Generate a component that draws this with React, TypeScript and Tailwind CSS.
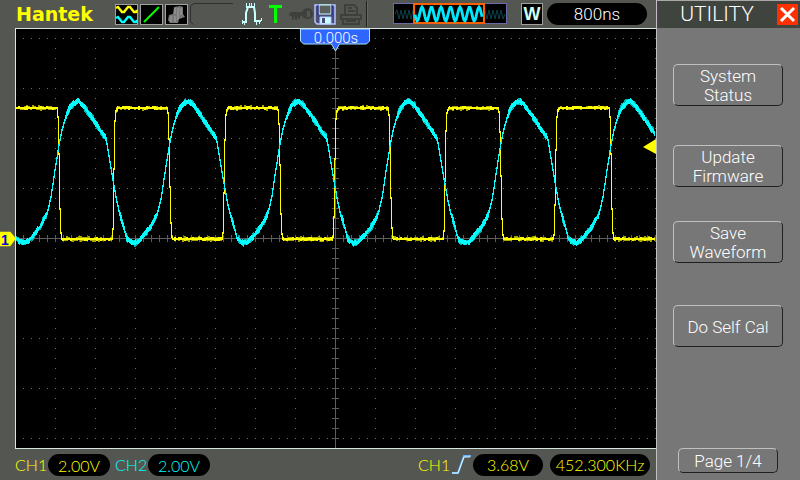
import type { ReactNode } from "react";

const PLOT_W = 640;
const PLOT_H = 419;
const AXIS_X = 319;
const AXIS_Y = 209;
const PERIOD = 110.4;

// one period of each channel, [x, y] in plot pixels
const CH1_SHAPE: [number, number][] = [
  [0, 79], [41, 79], [42, 88], [43, 125], [44, 180], [45, 204], [46, 210],
  [96, 210], [97, 200], [98, 140], [99, 92], [100, 82], [102, 79], [110.4, 79],
];
const CH2_SHAPE: [number, number][] = [
  [0, 209], [3, 212], [7, 214], [11, 213], [16, 208], [24, 198], [31, 185], [35, 168],
  [39, 141], [43, 116], [46, 101], [50, 87], [54, 78], [58, 74], [62, 72], [66, 75],
  [77, 90], [84, 101], [90, 109], [93, 127], [97, 151], [101, 173], [104, 186], [108, 198], [110.4, 209],
];

function noise(i: number): number {
  const n = Math.sin(i * 12.9898) * 43758.5453;
  return n - Math.floor(n);
}

function sample(shape: [number, number][], x: number): number {
  const t = ((x % PERIOD) + PERIOD) % PERIOD;
  for (let i = 1; i < shape.length; i++) {
    const [x0, y0] = shape[i - 1];
    const [x1, y1] = shape[i];
    if (t <= x1) return y0 + ((y1 - y0) * (t - x0)) / (x1 - x0);
  }
  return shape[0][1];
}

// every column is a vertical run from this sample to the next
function trace(shape: [number, number][], thick: number, jitter: number, seed: number): string {
  let d = "";
  for (let x = 0; x < PLOT_W - 1; x++) {
    const a = sample(shape, x);
    const b = sample(shape, x + 1);
    const steep = Math.abs(b - a) > 3;
    // neighbouring columns share their noise so the edge looks stepped
    const up = steep ? 0 : noise(Math.floor(x / 2) + seed) * jitter;
    const down = steep ? 0 : noise(Math.floor(x / 2) * 3 + seed) * jitter;
    const pad = steep ? 1 : thick / 2;
    const top = Math.round(Math.min(a, b) - pad - up);
    const bottom = Math.round(Math.max(a, b) + pad + down);
    d += `M${x} ${top}h1v${bottom - top}h-1z`;
  }
  return d;
}

function gridDots(): string {
  let d = "";
  for (let y = 9; y < PLOT_H; y += 50) {
    for (let x = 7; x < PLOT_W; x += 8) d += `M${x} ${y}h1v1h-1z`;
  }
  for (let x = 39; x < PLOT_W; x += 40) {
    for (let y = 9; y < PLOT_H; y += 10) d += `M${x} ${y}h1v1h-1z`;
  }
  return d;
}

function axes(): string {
  let d = `M0 ${AXIS_Y}h${PLOT_W}v1h-${PLOT_W}zM${AXIS_X} 0h1v${PLOT_H}h-1z`;
  for (let x = 7; x < PLOT_W; x += 8) d += `M${x} ${AXIS_Y - 3}h1v7h-1z`;
  for (let y = 9; y < PLOT_H; y += 10) d += `M${AXIS_X - 3} ${y}h7v1h-7z`;
  return d;
}

const GRID = gridDots();
const AXES = axes();
const CH1_DIM = trace(CH1_SHAPE, 1, 2.2, 5);
const CH1 = trace(CH1_SHAPE, 1, 1.4, 40);
const CH2_DIM = trace(CH2_SHAPE, 2, 3, 17);
const CH2 = trace(CH2_SHAPE, 2, 2.2, 91);

function Plot() {
  return (
    <svg viewBox={`0 0 ${PLOT_W} ${PLOT_H}`} className="block w-full bg-black" role="img" aria-label="Waveforms">
      <g shapeRendering="crispEdges">
        <path d={GRID} fill="#6b6b6b" />
        <path d={AXES} fill="#5c5c5c" />
        <path d={CH1_DIM} fill="#a8a800" />
        <path d={CH1} fill="#ffff00" />
        <path d={CH2_DIM} fill="#00b0b0" />
        <path d={CH2} fill="#00ffff" />
      </g>
      {/* trigger position */}
      <path d="M284.5 0v12l3 3h28l4 7 4-7h27l3-3V0z" fill="#2f66ff" stroke="#a8e4ff" />
      <text x="320" y="14" textAnchor="middle" fill="#fff" className="font-['Roboto'] text-[15px] font-light">
        0.000s
      </text>
      {/* trigger level */}
      <path d="M640 110v15l-13-7z" fill="#ffff00" />
    </svg>
  );
}

function IconBox({ label, children }: { label: string; children: ReactNode }) {
  return (
    <svg viewBox="0 0 23 21" className="h-[21px] w-[23px] shrink-0" role="img" aria-label={label}>
      <rect x="0.500" y="0.500" width="22" height="20" fill="#000" stroke="#a0a0a0" />
      {children}
    </svg>
  );
}

function wavePoints(from: number, to: number): string {
  const pts: string[] = [];
  for (let x = from; x <= to; x++) {
    pts.push(`${x},${(11 - 7 * Math.cos(((x - 29) * Math.PI * 2) / 9.5)).toFixed(1)}`);
  }
  return pts.join(" ");
}

function MemoryBar() {
  return (
    <svg viewBox="0 0 114 22" className="h-[22px] w-[114px] shrink-0" role="img" aria-label="Memory window">
      <rect x="0.500" y="0.500" width="113" height="20" fill="#000" stroke="#6a6aa8" />
      <path
        d="M2 11l2-4 2 9 2-9 2 9 2-9 2 9 2-9 2 9 2-9M92 7l2 9 2-9 2 9 2-9 2 9 2-9 2 9 2-9 2 9 2-5"
        fill="none"
        stroke="#0b4248"
      />
      <rect x="21" y="1" width="70" height="19" fill="#000" stroke="#ff6000" strokeWidth="2" />
      <polyline points={wavePoints(22, 89)} fill="none" stroke="#00eaff" strokeWidth="2.800" />
    </svg>
  );
}

function Pill({ className, children }: { className: string; children: ReactNode }) {
  return (
    <span className={`flex h-[22px] shrink-0 items-center justify-center rounded-full bg-black ${className}`}>
      {children}
    </span>
  );
}

function TopBar() {
  return (
    <header className="flex h-7 items-center">
      <h1 className="ml-4 w-[99px] shrink-0 font-['DejaVu_Sans'] text-[19px] leading-7 font-bold text-[#ffff00]">
        Hantek
      </h1>
      <div className="flex shrink-0 gap-0.5">
        <IconBox label="Channels">
          <path d="M1 4l2-1 4 5h2l4-5h2l4 5h2l1-2" fill="none" stroke="#ffff00" strokeWidth="2.400" />
          <path d="M1 14l2-1 4 5h2l4-5h2l4 5h2l1-2" fill="none" stroke="#00ffff" strokeWidth="2.400" />
        </IconBox>
        <IconBox label="Vectors">
          <path d="M4 18L19 3" stroke="#00ff00" strokeWidth="2" />
        </IconBox>
        <IconBox label="Persistence">
          <path d="M9 3l6-1 3 1v7l2 3-6 2-1 4H5l-2-3 1-5 4-1z" fill="#777" />
          <path d="M10 4v6M13 4v12M10 12v6M16 4v7M6 12v6" stroke="#a0a0a0" />
        </IconBox>
      </div>
      <svg viewBox="0 0 44 22" className="ml-0.5 h-[22px] w-11 shrink-0" aria-hidden="true">
        <path d="M43 0.500H4L0.500 3v16l3 2.500" fill="none" stroke="#30302f" />
      </svg>
      <svg viewBox="0 0 22 22" className="ml-[7px] h-[22px] w-[22px] shrink-0" role="img" aria-label="Pulse">
        <path
          d="M5 19V10l2-6M5 4h9M13 4l1 6v9M1 19h5M14 18h6"
          fill="none"
          stroke="#c8ffff"
          strokeWidth="2"
        />
        <path d="M1.500 21v-4M3.500 22v-4M5.500 4V0M8.500 4V0M10.500 4V0M13.500 4V0M15.500 18v4M18.500 18v3M20.500 18v-3" fill="none" stroke="#c8ffff" />
      </svg>
      <svg viewBox="0 0 14 18" className="ml-1.5 h-[18px] w-3.5 shrink-0" role="img" aria-label="Triggered">
        <path d="M0 0h13v3H8v15H5V3H0z" fill="#00ff00" />
      </svg>
      <svg viewBox="0 0 24 14" className="ml-1.5 h-3.5 w-6 shrink-0" aria-hidden="true">
        <path
          d="M0 7l2-2h11c1-3 4-4 6-4 3 0 5 3 5 6s-2 5-5 5-5-1-6-3h-2v3H9v-2H8v3H6v-3H5v3H3V9H1zM18 4v6h3V4z"
          fill="#3d413c"
          fillRule="evenodd"
        />
      </svg>
      <svg viewBox="0 0 22 21" className="ml-px h-[21px] w-[22px] shrink-0" role="img" aria-label="Save">
        <path d="M1 1h20v19H3l-2-2z" fill="#4a4c78" stroke="#b4c4ff" strokeWidth="1.500" />
        <path d="M5 1h12v9H5z" fill="#5c605e" stroke="#c8ffff" />
        <path d="M4 1v10M18 1v10" stroke="#20209c" />
        <path d="M6 13h11v7H6z" fill="#c8ffff" stroke="#b4c4ff" />
        <path d="M8 14h3v5H8z" fill="#4a4a78" />
      </svg>
      <svg viewBox="0 0 22 21" className="ml-1 h-[21px] w-[22px] shrink-0" aria-hidden="true">
        <path d="M5 10V1h9l3 3v6M8 4h4M8 7h7M1 11h20v4H1zM3 15v5h16v-5M6 17h10" fill="none" stroke="#3d413c" strokeWidth="2" />
      </svg>
      <div className="ml-1 h-[26px] w-0.5 shrink-0 border-r border-[#666864] bg-[#20201f]" />
      <div className="ml-auto flex items-center">
        <MemoryBar />
        <svg viewBox="0 0 22 22" className="ml-3.5 h-[22px] w-[22px] shrink-0" role="img" aria-label="W">
          <rect x="0.500" y="0.500" width="21" height="21" fill="#000" stroke="#a0a0a0" />
          <text x="11" y="17" textAnchor="middle" fill="#d0fff4" className="font-['Liberation_Sans'] text-[18px] font-bold">
            W
          </text>
        </svg>
        <Pill className="mr-[9px] ml-1 w-[100px] pt-0.5 font-['Roboto'] text-[17px] font-light text-white">800ns</Pill>
      </div>
    </header>
  );
}

function BottomBar() {
  return (
    <footer className="flex h-[31px] items-center pl-[15px] font-['Lato'] text-[16px] font-light text-[#ffff00]">
      <span className="w-[33px] shrink-0">CH1</span>
      <Pill className="w-[62px] pt-0.5">2.00V</Pill>
      <span className="ml-[5px] w-[33px] shrink-0 text-[#00ffff]">CH2</span>
      <Pill className="w-[62px] pt-0.5 text-[#00ffff]">2.00V</Pill>
      <div className="mr-1.5 ml-auto flex items-center">
        <span className="w-[34px] shrink-0">CH1</span>
        <svg viewBox="0 0 19 19" className="h-[19px] w-[19px]" role="img" aria-label="Rising edge">
          <path d="M0 18h6L12 1h7" fill="none" stroke="#6cb4ff" strokeWidth="2" />
          <path d="M0 18h6L12 2h6" fill="none" stroke="#d8f8ff" />
        </svg>
        <Pill className="ml-0.5 w-[70px]">3.68V</Pill>
        <Pill className="ml-[7px] w-[100px]">452.300KHz</Pill>
      </div>
    </footer>
  );
}

const BUTTON =
  "rounded-[5px] border border-t-[#c0c0c0] border-r-[#202020] border-b-[#202020] border-l-[#c0c0c0] pt-0.5 text-[17px] leading-[19px]";

const MENU = [
  { lines: ["System", "Status"], gap: "mt-9" },
  { lines: ["Update", "Firmware"], gap: "mt-[39px]" },
  { lines: ["Save", "Waveform"], gap: "mt-[34px]" },
  { lines: ["Do Self Cal"], gap: "mt-[42px]" },
];

function UtilityMenu() {
  return (
    <aside className="flex w-36 shrink-0 flex-col border-l border-[#c4bcc4] bg-[#777] font-['Roboto'] font-light text-white">
      <div className="flex h-7 items-center border-t border-[#a8a8a8] bg-[#40443f] pr-0.5">
        <h2 className="flex-1 text-center text-[21px] leading-none">UTILITY</h2>
        <button type="button" aria-label="Close" className="h-[21px] w-[21px] bg-[#ff3000]">
          <svg viewBox="0 0 21 21" className="block h-full w-full" aria-hidden="true">
            <path d="M4 4l13 13M17 4L4 17" stroke="#fff" strokeWidth="3" />
          </svg>
        </button>
      </div>
      <div className="flex flex-1 flex-col items-center pr-px">
        {MENU.map(item => (
          <button key={item.lines[0]} type="button" className={`h-[42px] w-[110px] ${BUTTON} ${item.gap}`}>
            {item.lines.map(line => (
              <span key={line} className="block">{line}</span>
            ))}
          </button>
        ))}
        <button type="button" className={`mt-auto mb-[7px] h-[25px] w-[100px] ${BUTTON}`}>
          Page 1/4
        </button>
      </div>
    </aside>
  );
}

export default function App() {
  return (
    <div className="flex min-h-screen bg-[#545652]">
      <main className="flex min-w-0 flex-1 flex-col">
        <TopBar />
        <div className="flex">
          <div className="relative w-[15px] shrink-0">
            <svg viewBox="0 0 16 15" className="absolute top-1/2 left-0 h-[15px] w-4 -translate-y-1/2" role="img" aria-label="Channel 1 zero level">
              <path d="M0 0h10l6 7-6 8H0z" fill="#ffff00" />
              <text x="5" y="13" textAnchor="middle" fill="#0000e0" className="font-['Liberation_Sans'] text-[14px] font-bold">
                1
              </text>
            </svg>
          </div>
          <div className="min-w-0 flex-1 border-y border-l border-[#d8e4e0]">
            <Plot />
          </div>
        </div>
        <BottomBar />
      </main>
      <UtilityMenu />
    </div>
  );
}
